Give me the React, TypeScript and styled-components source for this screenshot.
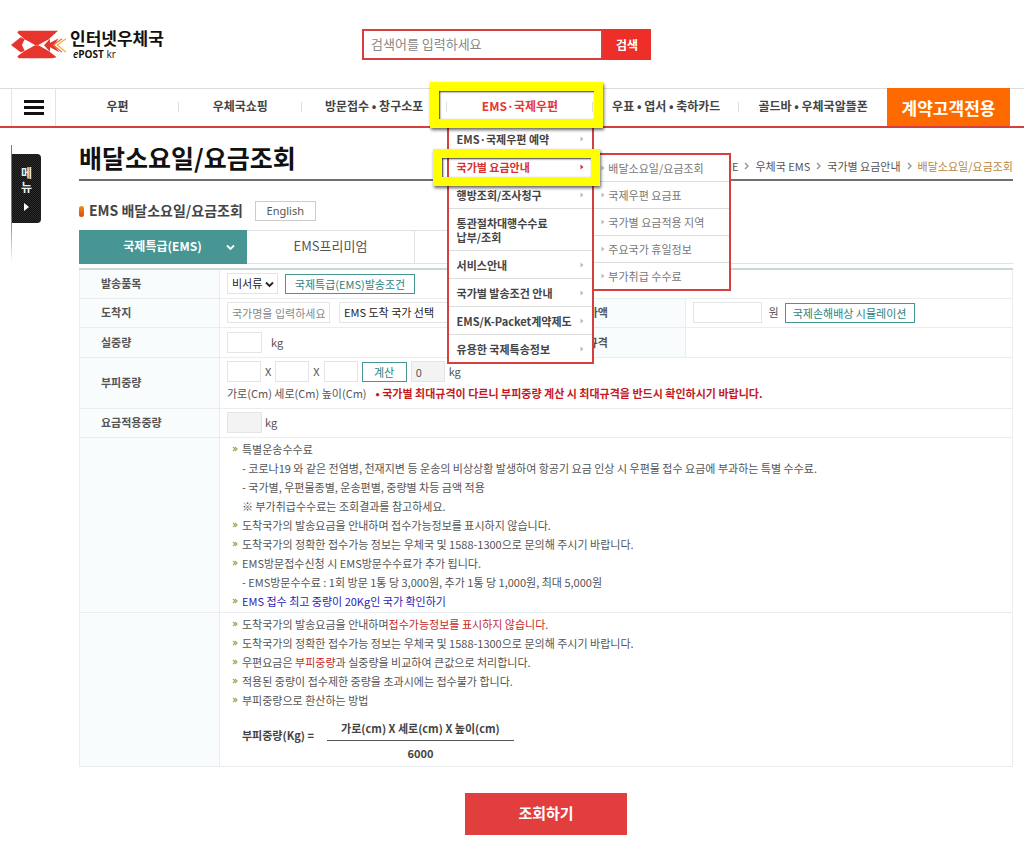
import React from "react";
import styled, { createGlobalStyle, css } from "styled-components";

const RED = "#d5403f";
const TEAL = "#479694";
const LINE = "#e8eded";

const GlobalStyle = createGlobalStyle`
  *, *::before, *::after { box-sizing: border-box; }
  body {
    margin: 0;
    background: #fff;
    color: #555;
    font-family: "Noto Sans CJK KR", "Noto Sans", sans-serif;
    font-size: 11px;
    line-height: 19px;
  }
  a { color: inherit; text-decoration: none; }
  ul, h1, h2, p { margin: 0; padding: 0; }
  ul { list-style: none; }
  button, input, select { font: inherit; color: inherit; margin: 0; }
`;

const Header = styled.header`
  display: grid;
  grid-template-columns: 362px 289px 1fr;
  align-items: center;
  height: 88px;
`;

const Logo = styled.a`
  display: flex;
  align-items: center;
  padding-left: 8px;
  color: #111;
`;

const LogoText = styled.span`
  display: flex;
  flex-direction: column;
  font-size: 17px;
  font-weight: 700;
  line-height: 20px;
`;

const LogoSub = styled.span`
  padding-left: 3px;
  font: 10px/12px "Open Sans", sans-serif;
  em { font-weight: 600; }
  b { font-weight: 700; }
`;

const Search = styled.form`
  display: flex;
  height: 31px;
`;

const SearchInput = styled.input`
  flex: 1;
  min-width: 0;
  padding: 0 7px 2px;
  border: 2px solid ${RED};
  font-size: 13px;
  outline: 0;
  &::placeholder { color: #888; }
`;

const SearchButton = styled.button`
  width: 48px;
  padding: 0;
  border: 0;
  background: #ee2e28;
  color: #fff;
  font-size: 12px;
  font-weight: 700;
`;

const NavBar = styled.nav`
  display: flex;
  height: 40px;
  padding: 0 14px 0 11px;
  border-top: 1px solid #ddd;
  border-bottom: 2px solid ${RED};
`;

const MenuToggle = styled.button`
  display: flex;
  flex-direction: column;
  align-items: center;
  justify-content: center;
  gap: 3px;
  width: 45px;
  padding: 0;
  border: solid #e4e4e4;
  border-width: 0 1px;
  background: none;
`;

const ToggleBar = styled.span`
  width: 20px;
  height: 3px;
  background: #111;
`;

const NavList = styled.ul`
  flex: 1;
  display: grid;
  grid-template-columns: 123fr 123fr 145fr 147fr 146fr 148fr;
`;

const NavItem = styled.li<{ $last?: boolean }>`
  position: relative;
  display: flex;
  align-items: center;
  justify-content: center;
  padding-bottom: 4px;
  &::after {
    content: "";
    position: absolute;
    right: 0;
    top: 13px;
    height: 10px;
    border-right: ${(p) => (p.$last ? "0" : "1px solid #ddd")};
  }
`;

const NavLink = styled.a<{ $active?: boolean }>`
  color: ${(p) => (p.$active ? "#e23a36" : "#444")};
  font-size: 12px;
  font-weight: 700;
  white-space: nowrap;
`;

const ContractLink = styled.a`
  display: flex;
  align-items: center;
  justify-content: center;
  width: 123px;
  margin-top: -1px;
  background: #ff6a00;
  color: #fff;
  font-size: 17px;
  font-weight: 700;
`;

const Marker = styled.span<{ $wide?: boolean }>`
  position: absolute;
  z-index: 5;
  pointer-events: none;
  border: 9px solid #ff0;
  box-shadow: 1px 2px 3px rgba(0, 0, 0, 0.6), inset 1px 1px 2px rgba(0, 0, 0, 0.8);
  ${(p) =>
    p.$wide
      ? css`
          inset: -7px -10px -2px -17px;
        `
      : css`
          inset: -4px -8px -6px -16px;
        `}
`;

const Dropdown = styled.ul`
  position: absolute;
  z-index: 3;
  top: 36px;
  left: 0;
  right: -1px;
  border: 2px solid ${RED};
  border-top: 0;
  background: #fff;
`;

const DropItem = styled.li`
  position: relative;
  border-bottom: 1px solid #ddd;
  &:last-child { border-bottom: 0; }
`;

const DropLink = styled.a<{ $active?: boolean }>`
  display: flex;
  align-items: center;
  justify-content: space-between;
  padding: 7px 8px 6px;
  color: ${(p) => (p.$active ? "#d8302e" : "#444")};
  font-weight: 700;
  line-height: 14px;
  white-space: pre-line;
`;

const SubMenu = styled.ul`
  position: absolute;
  z-index: 4;
  top: 0;
  left: 100%;
  width: 139px;
  border: 2px solid ${RED};
  background: #fff;
`;

const SubItem = styled.li`
  border-bottom: 1px solid #ddd;
  &:last-child { border-bottom: 0; }
`;

const SubLink = styled.a`
  display: flex;
  align-items: center;
  gap: 3px;
  height: 26px;
  padding-left: 7px;
  color: #777;
  white-space: nowrap;
`;

const Body = styled.div`
  display: flex;
  padding: 0 11px;
`;

const Side = styled.aside`
  flex: 0 0 68px;
  padding-top: 17px;
`;

const SideRail = styled.div`
  height: 117px;
  padding-top: 9px;
  border-left: 1px solid;
  border-image: linear-gradient(#777 60%, #fff) 1;
`;

const SideTab = styled.button`
  display: flex;
  flex-direction: column;
  align-items: center;
  justify-content: center;
  width: 29px;
  height: 69px;
  padding: 0;
  border: 0;
  border-radius: 0 4px 4px 0;
  background: repeating-conic-gradient(#111 0 25%, #2b2b2b 0 50%) 0 0 / 2px 2px;
  color: #eee;
  font-size: 12px;
  font-weight: 700;
  line-height: 14px;
  svg { margin-top: 9px; }
`;

const Main = styled.main`
  flex: 1;
  min-width: 0;
`;

const TitleRow = styled.div`
  display: flex;
  align-items: center;
  justify-content: space-between;
  height: 53px;
  border-bottom: 2px solid #707070;
`;

const Title = styled.h1`
  padding-bottom: 5px;
  margin-top: 11px;
  color: #111;
  font-size: 25px;
  font-weight: 700;
  line-height: 32px;
`;

const Crumbs = styled.div`
  display: flex;
  align-items: center;
  gap: 6px;
  padding-top: 25px;
`;

const CurrentCrumb = styled.span`
  color: #b98540;
`;

const SubTitleRow = styled.div`
  display: flex;
  align-items: center;
  height: 49px;
  padding-top: 11px;
`;

const Pill = styled.span`
  width: 5px;
  height: 11px;
  margin-right: 5px;
  border-radius: 3px;
  background: linear-gradient(#f08a1c, #d94a08);
`;

const SubTitle = styled.h2`
  margin-right: 12px;
  padding-bottom: 2px;
  color: #444;
  font-size: 14px;
  font-weight: 700;
`;

const PlainButton = styled.button`
  width: 61px;
  height: 20px;
  padding: 0;
  border: 1px solid #ccc;
  background: #fff;
  font-family: "Noto Sans", sans-serif;
  line-height: 16px;
`;

const Tabs = styled.div`
  display: flex;
  height: 34px;
  border-bottom: 1px solid #dfe3e3;
`;

const Tab = styled.button<{ $active?: boolean }>`
  position: relative;
  width: 168px;
  height: 34px;
  padding: 0 0 3px;
  border: solid #dfe3e3;
  border-width: 1px 1px 1px 0;
  background: #fff;
  font-size: 13px;
  ${(p) =>
    p.$active &&
    css`
      border-color: ${TEAL};
      background: ${TEAL};
      color: #fff;
      font-size: 12px;
      font-weight: 700;
    `}
  svg { position: absolute; right: 11px; top: 13px; }
`;

const RateTable = styled.table`
  width: 100%;
  margin-top: 4px;
  table-layout: fixed;
  border-collapse: collapse;
  border: 1px solid ${LINE};
  border-top: 2px solid #ccd8d8;
`;

const LabelCol = styled.col`
  width: 140px;
`;

const WideCol = styled.col`
  width: 35%;
`;

const Row = styled.tr<{ $height: number }>`
  height: ${(p) => p.$height}px;
`;

const Th = styled.th`
  padding: 0 0 0 21px;
  border: 1px solid ${LINE};
  background: #f9fcfc;
  text-align: left;
  font-weight: 700;
`;

const Td = styled.td`
  padding: 0 7px;
  border: solid ${LINE};
  border-width: 1px 0;
`;

const Line = styled.div<{ $gap?: number }>`
  display: flex;
  align-items: center;
  gap: ${(p) => p.$gap ?? 3}px;
  height: 22px;
  white-space: nowrap;
`;

const Field = styled.input<{ $w: number }>`
  width: ${(p) => p.$w}px;
  height: 21px;
  padding: 0 4px;
  border: 1px solid #e4e4e4;
  background: #fff;
  &:read-only { background: #f3f3f3; }
  &::placeholder { color: #888; }
`;

const Picker = styled.span<{ $w: number }>`
  position: relative;
  display: inline-flex;
  width: ${(p) => p.$w}px;
  svg { position: absolute; right: 4px; top: 8px; pointer-events: none; }
`;

const Select = styled.select`
  appearance: none;
  width: 100%;
  height: 21px;
  padding: 0 4px;
  border: 1px solid #e4e4e4;
  border-radius: 0;
  background: #fff;
  color: #222;
`;

const TealButton = styled.button<{ $w: number }>`
  width: ${(p) => p.$w}px;
  height: 20px;
  padding: 0;
  border: 1px solid ${TEAL};
  background: #fff;
  color: #2d827d;
  line-height: 16px;
`;

const Warning = styled.strong`
  color: #c41a1f;
`;

const Notes = styled.ul`
  padding: 2px 0 1px;
`;

const Note = styled.li<{ $plain?: boolean }>`
  display: flex;
  align-items: center;
  gap: 4px;
  padding-left: ${(p) => (p.$plain ? 15 : 5)}px;
  white-space: pre;
`;

const Red = styled.span`
  color: #c8282b;
`;

const BlueLink = styled.a`
  color: #2a22b8;
`;

const Formula = styled.div`
  display: flex;
  align-items: center;
  gap: 13px;
  padding: 5px 0 1px 15px;
  color: #444;
  font-weight: 700;
`;

const FormulaLabel = styled.span`
  padding-bottom: 10px;
`;

const Fraction = styled.div`
  width: 187px;
  text-align: center;
  line-height: 24px;
`;

const Numerator = styled.div`
  border-bottom: 1px solid #555;
`;

const SubmitRow = styled.div`
  display: flex;
  justify-content: center;
  padding: 26px 0 14px;
`;

const SubmitButton = styled.button`
  width: 162px;
  height: 42px;
  padding: 0 0 2px;
  border: 0;
  background: #e23e3e;
  color: #fff;
  font-size: 15px;
  font-weight: 700;
`;

const LogoMark = () => (
  <svg width="62" height="36" viewBox="0 0 186 108" aria-hidden="true">
    <path fill="#e5352c" d="M32 14H150L122 40L91 57H81L50 40L28 20Z" />
    <path fill="#e5352c" d="M32 97H132L146 94L122 75L91 58H81L50 75L28 91Z" />
    <path fill="#e5352c" d="M9 57L38 34L50 40L42 57L50 75L38 79Z" />
    <path fill="#e5352c" d="M126 38V77L108 58Z" />
    <path fill="#e5352c" d="M114 57L152 37L138 57L154 79Z" />
    <path fill="none" stroke="#f0703a" strokeWidth="4" d="M162 38L136 57L162 79" />
    <path fill="none" stroke="#f5b04a" strokeWidth="4" d="M174 38L148 57L174 79" />
  </svg>
);

const SmallArrow = ({ color = "#bbb" }: { color?: string }) => (
  <svg width="4" height="6" viewBox="0 0 4 6" aria-hidden="true">
    <path d="M0.500 0.500L3.500 3L0.500 5.500Z" fill={color} />
  </svg>
);

const CrumbArrow = () => (
  <svg width="5" height="8" viewBox="0 0 5 8" aria-hidden="true">
    <path d="M1 1L4 4L1 7" fill="none" stroke="#999" strokeWidth="1.500" />
  </svg>
);

const DownArrow = ({ color }: { color: string }) => (
  <svg width="9" height="7" viewBox="0 0 9 7" aria-hidden="true">
    <path d="M1 1.500L4.500 5L8 1.500" fill="none" stroke={color} strokeWidth="1.800" />
  </svg>
);

const NoteMark = () => (
  <svg width="6" height="6" viewBox="0 0 6 6" aria-hidden="true">
    <path d="M1 1L3 3L1 5M3 1L5 3L3 5" fill="none" stroke="#a9ad5c" strokeWidth="1.200" />
  </svg>
);

const dropItems = [
  { label: "EMS·국제우편 예약", arrow: true },
  { label: "국가별 요금안내", arrow: true, active: true },
  { label: "행방조회/조사청구", arrow: true },
  { label: "통관절차대행수수료\n납부/조회", arrow: false },
  { label: "서비스안내", arrow: true },
  { label: "국가별 발송조건 안내", arrow: true },
  { label: "EMS/K-Packet계약제도", arrow: true },
  { label: "유용한 국제특송정보", arrow: true },
];

const subItems = [
  "배달소요일/요금조회",
  "국제우편 요금표",
  "국가별 요금적용 지역",
  "주요국가 휴일정보",
  "부가취급 수수료",
];

const EmsMenu = () => (
  <Dropdown>
    {dropItems.map((item) => (
      <DropItem key={item.label}>
        <DropLink href="#" $active={item.active}>
          {item.label}
          {item.arrow && <SmallArrow color={item.active ? "#d8302e" : "#bbb"} />}
        </DropLink>
        {item.active && (
          <>
            <SubMenu>
              {subItems.map((label) => (
                <SubItem key={label}>
                  <SubLink href="#">
                    <SmallArrow />
                    {label}
                  </SubLink>
                </SubItem>
              ))}
            </SubMenu>
            <Marker />
          </>
        )}
      </DropItem>
    ))}
  </Dropdown>
);

export default function App() {
  return (
    <>
      <GlobalStyle />
      <Header>
        <Logo href="#">
          <LogoMark />
          <LogoText>
            인터넷우체국
            <LogoSub>
              <em>e</em>
              <b>POST</b> kr
            </LogoSub>
          </LogoText>
        </Logo>
        <Search onSubmit={(e) => e.preventDefault()}>
          <SearchInput aria-label="검색어" placeholder="검색어를 입력하세요" />
          <SearchButton type="submit">검색</SearchButton>
        </Search>
      </Header>

      <NavBar>
        <MenuToggle type="button" aria-label="전체메뉴">
          <ToggleBar />
          <ToggleBar />
          <ToggleBar />
        </MenuToggle>
        <NavList>
          <NavItem><NavLink href="#">우편</NavLink></NavItem>
          <NavItem><NavLink href="#">우체국쇼핑</NavLink></NavItem>
          <NavItem><NavLink href="#">방문접수 • 창구소포</NavLink></NavItem>
          <NavItem>
            <NavLink href="#" $active>EMS·국제우편</NavLink>
            <Marker $wide />
            <EmsMenu />
          </NavItem>
          <NavItem><NavLink href="#">우표 • 엽서 • 축하카드</NavLink></NavItem>
          <NavItem $last><NavLink href="#">골드바 • 우체국알뜰폰</NavLink></NavItem>
        </NavList>
        <ContractLink href="#">계약고객전용</ContractLink>
      </NavBar>

      <Body>
        <Side>
          <SideRail>
            <SideTab type="button">
              <span>메</span>
              <span>뉴</span>
              <svg width="5" height="8" viewBox="0 0 5 8" aria-hidden="true">
                <path d="M0 0L5 4L0 8Z" fill="#fff" />
              </svg>
            </SideTab>
          </SideRail>
        </Side>

        <Main>
          <TitleRow>
            <Title>배달소요일/요금조회</Title>
            <Crumbs>
              <a href="#">HOME</a>
              <CrumbArrow />
              <a href="#">우체국 EMS</a>
              <CrumbArrow />
              <a href="#">국가별 요금안내</a>
              <CrumbArrow />
              <CurrentCrumb>배달소요일/요금조회</CurrentCrumb>
            </Crumbs>
          </TitleRow>

          <SubTitleRow>
            <Pill />
            <SubTitle>EMS 배달소요일/요금조회</SubTitle>
            <PlainButton type="button">English</PlainButton>
          </SubTitleRow>

          <Tabs>
            <Tab type="button" $active>
              국제특급(EMS)
              <DownArrow color="#fff" />
            </Tab>
            <Tab type="button">EMS프리미엄</Tab>
            <Tab type="button" aria-label="K-Packet" />
          </Tabs>

          <RateTable>
            <colgroup>
              <LabelCol />
              <col />
              <LabelCol />
              <WideCol />
            </colgroup>
            <tbody>
              <Row $height={29}>
                <Th scope="row"><label htmlFor="item">발송품목</label></Th>
                <Td colSpan={3}>
                  <Line $gap={7}>
                    <Picker $w={51}>
                      <Select id="item"><option>비서류</option></Select>
                      <DownArrow color="#222" />
                    </Picker>
                    <TealButton type="button" $w={130}>국제특급(EMS)발송조건</TealButton>
                  </Line>
                </Td>
              </Row>
              <Row $height={29}>
                <Th scope="row"><label htmlFor="country">도착지</label></Th>
                <Td>
                  <Line $gap={9}>
                    <Field id="country" $w={103} placeholder="국가명을 입력하세요" />
                    <Picker $w={190}>
                      <Select aria-label="도착 국가"><option>EMS 도착 국가 선택</option></Select>
                      <DownArrow color="#222" />
                    </Picker>
                  </Line>
                </Td>
                <Th scope="row"><label htmlFor="value">물품가액</label></Th>
                <Td>
                  <Line $gap={6}>
                    <Field id="value" $w={69} />
                    원
                    <TealButton type="button" $w={130}>국제손해배상 시뮬레이션</TealButton>
                  </Line>
                </Td>
              </Row>
              <Row $height={30}>
                <Th scope="row"><label htmlFor="weight">실중량</label></Th>
                <Td>
                  <Line $gap={9}>
                    <Field id="weight" $w={35} />
                    kg
                  </Line>
                </Td>
                <Th scope="row">포장규격</Th>
                <Td />
              </Row>
              <Row $height={51}>
                <Th scope="row"><label htmlFor="width">부피중량</label></Th>
                <Td colSpan={3}>
                  <Line $gap={4}>
                    <Field id="width" $w={34} aria-label="가로" />
                    X
                    <Field $w={34} aria-label="세로" />
                    X
                    <Field $w={34} aria-label="높이" />
                    <TealButton type="button" $w={45}>계산</TealButton>
                    <Field $w={34} readOnly value="0" aria-label="부피중량" />
                    kg
                  </Line>
                  <Line $gap={9}>
                    <span>가로(Cm) 세로(Cm) 높이(Cm)</span>
                    <Warning>
                      • 국가별 최대규격이 다르니 부피중량 계산 시 최대규격을 반드시 확인하시기 바랍니다.
                    </Warning>
                  </Line>
                </Td>
              </Row>
              <Row $height={29}>
                <Th scope="row"><label htmlFor="charge">요금적용중량</label></Th>
                <Td colSpan={3}>
                  <Line>
                    <Field id="charge" $w={35} readOnly value="" />
                    kg
                  </Line>
                </Td>
              </Row>
              <Row $height={175}>
                <Th />
                <Td colSpan={3}>
                  <Notes>
                    <Note><NoteMark />특별운송수수료</Note>
                    <Note $plain>- 코로나19 와 같은 전염병, 천재지변 등 운송의 비상상황 발생하여 항공기 요금 인상 시 우편물 접수 요금에 부과하는 특별 수수료.</Note>
                    <Note $plain>- 국가별, 우편물종별, 운송편별, 중량별 차등 금액 적용</Note>
                    <Note $plain>※ 부가취급수수료는 조회결과를 참고하세요.</Note>
                    <Note><NoteMark />도착국가의 발송요금을 안내하며 접수가능정보를 표시하지 않습니다.</Note>
                    <Note><NoteMark />도착국가의 정확한 접수가능 정보는 우체국 및 1588-1300으로 문의해 주시기 바랍니다.</Note>
                    <Note><NoteMark />EMS방문접수신청 시 EMS방문수수료가 추가 됩니다.</Note>
                    <Note $plain>- EMS방문수수료 : 1회 방문 1통 당 3,000원, 추가 1통 당 1,000원, 최대 5,000원</Note>
                    <Note><NoteMark /><BlueLink href="#">EMS 접수 최고 중량이 20Kg인 국가 확인하기</BlueLink></Note>
                  </Notes>
                </Td>
              </Row>
              <Row $height={154}>
                <Th />
                <Td colSpan={3}>
                  <Notes>
                    <Note><NoteMark /><span>도착국가의 발송요금을 안내하며<Red>접수가능정보를 표시하지 않습니다.</Red></span></Note>
                    <Note><NoteMark />도착국가의 정확한 접수가능 정보는 우체국 및 1588-1300으로 문의해 주시기 바랍니다.</Note>
                    <Note><NoteMark /><span>우편요금은 <Red>부피중량</Red>과 실중량을 비교하여 큰값으로 처리합니다.</span></Note>
                    <Note><NoteMark />적용된 중량이 접수제한 중량을 초과시에는 접수불가 합니다.</Note>
                    <Note><NoteMark />부피중량으로 환산하는 방법</Note>
                  </Notes>
                  <Formula>
                    <FormulaLabel>부피중량(Kg) =</FormulaLabel>
                    <Fraction>
                      <Numerator>가로(cm) X 세로(cm) X 높이(cm)</Numerator>
                      6000
                    </Fraction>
                  </Formula>
                </Td>
              </Row>
            </tbody>
          </RateTable>

          <SubmitRow>
            <SubmitButton type="submit">조회하기</SubmitButton>
          </SubmitRow>
        </Main>
      </Body>
    </>
  );
}
